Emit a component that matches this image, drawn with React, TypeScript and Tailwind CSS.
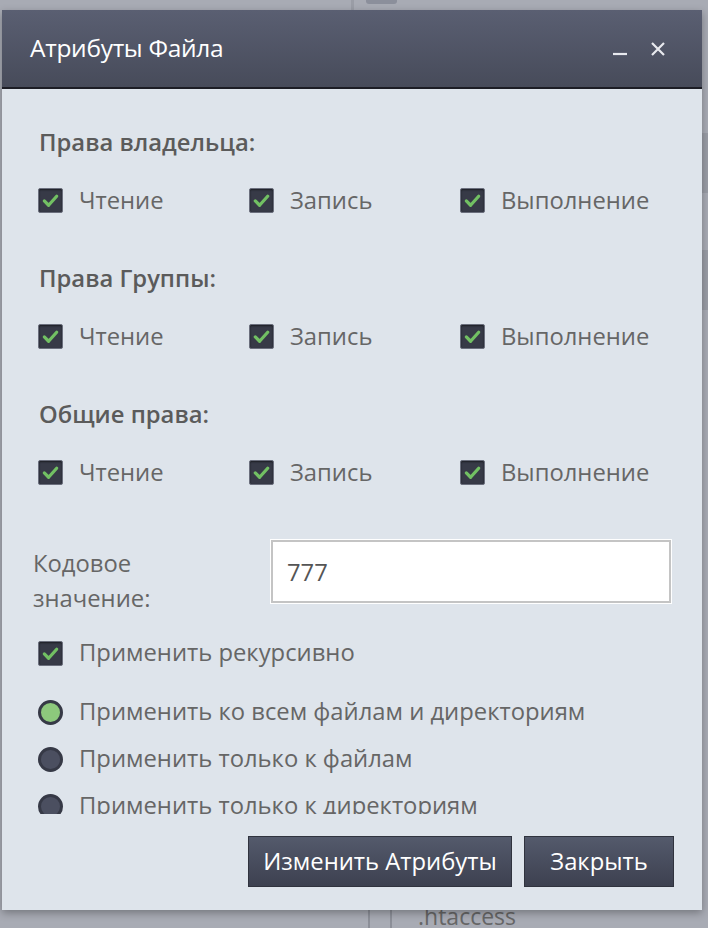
import React, { useState } from 'react';

const font = { fontFamily: '"Open Sans", "Noto Sans", sans-serif' };

const CheckBox = ({ checked = true }: { checked?: boolean }) => (
  <span className="w-[25px] h-[25px] shrink-0 flex items-center justify-center bg-[#373a47] border border-[#6b6f7d] rounded-[2px] shadow-[inset_0_1px_2px_rgba(0,0,0,0.5)]">
    {checked && (
      <svg width="19" height="19" viewBox="0 0 20 20">
        <path d="M3.5 10.5 L8 15 L16.5 5.5" fill="none" stroke="#72c063" strokeWidth="3.4" strokeLinecap="round" strokeLinejoin="round" />
      </svg>
    )}
  </span>
);

const Radio = ({ on = false }: { on?: boolean }) => (
  <span
    className={`w-[25px] h-[25px] shrink-0 rounded-full border-[3px] border-[#363946] ${
      on ? 'bg-[#8dc87c]' : 'bg-[#4b4f60]'
    }`}
  />
);

const PermRow = () => (
  <div className="grid grid-cols-[211px_211px_1fr] h-[26px] items-center">
    {['Чтение', 'Запись', 'Выполнение'].map(l => (
      <label key={l} className="flex items-center gap-[16px] text-[23.8px] text-[#666] whitespace-nowrap">
        <CheckBox />
        <span>{l}</span>
      </label>
    ))}
  </div>
);

const Section = ({ title, first }: { title: string; first?: boolean }) => (
  <div className={first ? '' : 'mt-[56px]'}>
    <h3 className="pl-[1px] h-[26px] leading-[26px] text-[23.8px] font-semibold text-[#5b5b5b] whitespace-nowrap">{title}</h3>
    <div className="mt-[28px]">
      <PermRow />
    </div>
  </div>
);

export default function App() {
  const [mode] = useState(0);
  const radios = [
    'Применить ко всем файлам и директориям',
    'Применить только к файлам',
    'Применить только к директориям',
  ];

  return (
    <div className="relative w-[708px] h-[928px] overflow-hidden bg-[#a8abb4]" style={font}>
      {/* page behind the modal */}
      <div className="absolute left-[351px] top-0 w-[3px] h-[12px] bg-[#9a9da6]" />
      <div className="absolute left-[366px] top-[-6px] w-[31px] h-[10px] rounded-[3px] bg-[#8b8f9b]" />
      <div className="absolute right-0 top-[133px] w-[6px] h-[60px] bg-[#9a9da6]" />
      <div className="absolute right-0 top-[250px] w-[6px] h-[60px] bg-[#9a9da6]" />
      <div className="absolute left-[368px] top-[908px] w-[24px] h-[30px] border-2 border-[#8c8f98] rounded-[2px]" />
      <div className="absolute left-[418px] top-[900px] text-[23px] leading-[32px] text-[#666]">.htaccess</div>

      {/* dialog */}
      <div className="absolute left-[2px] top-[10px] w-[700px] h-[900px] flex flex-col shadow-[0_3px_8px_rgba(0,0,0,0.3)]">
        <div className="h-[79px] shrink-0 flex items-center justify-between pl-[28px] pr-[36px] bg-gradient-to-b from-[#5a5f72] to-[#474b5a] border-b-[2px] border-[#1c1d25]">
          <h2 className="text-[24.5px] text-white tracking-[-0.3px]">Атрибуты Файла</h2>
          <div className="flex items-center gap-[22px] text-[#e8e9ee]">
            <svg width="16" height="16" viewBox="0 0 16 16"><path d="M1 13 H15" stroke="currentColor" strokeWidth="2.2" /></svg>
            <svg width="16" height="16" viewBox="0 0 16 16"><path d="M2 2 L14 14 M14 2 L2 14" stroke="currentColor" strokeWidth="2.2" /></svg>
          </div>
        </div>

        <div className="flex-1 flex flex-col bg-[#dee4eb]">
          <div className="h-[725px] overflow-hidden pl-[36px] pr-[30px] pt-[40px]">
            <Section title="Права владельца:" first />
            <Section title="Права Группы:" />
            <Section title="Общие права:" />

            <div className="mt-[58px] h-[65px] flex items-start">
              <div className="w-[237px] -ml-[5px] pt-[7px] text-[23.8px] leading-[35px] text-[#666]">
                Кодовое
                <br />
                значение:
              </div>
              <div className="w-[402px] h-[65px] border border-white">
                <input
                  readOnly
                  value="777"
                  className="w-full h-full border-2 border-[#c4c4c4] bg-white px-[14px] text-[23.8px] text-[#555] outline-none"
                  style={font}
                />
              </div>
            </div>

            <label className="mt-[36px] flex items-center gap-[16px] h-[26px] text-[23.8px] text-[#666]">
              <CheckBox />
              <span>Применить рекурсивно</span>
            </label>

            <div className="mt-[33px] flex flex-col gap-[21px]">
              {radios.map((r, i) => (
                <label key={r} className="flex items-center gap-[16px] h-[26px] text-[23.8px] text-[#666] whitespace-nowrap">
                  <Radio on={i === mode} />
                  <span>{r}</span>
                </label>
              ))}
            </div>
          </div>

          <div className="flex justify-end gap-[12px] pr-[28px] pt-[22px]">
            <button className="h-[51px] w-[264px] text-[23.8px] text-white bg-gradient-to-b from-[#545a6c] to-[#3d4150] border border-[#30333e]">
              Изменить Атрибуты
            </button>
            <button className="h-[51px] w-[150px] text-[23.8px] text-white bg-gradient-to-b from-[#545a6c] to-[#3d4150] border border-[#30333e]">
              Закрыть
            </button>
          </div>
        </div>
      </div>
    </div>
  );
}
